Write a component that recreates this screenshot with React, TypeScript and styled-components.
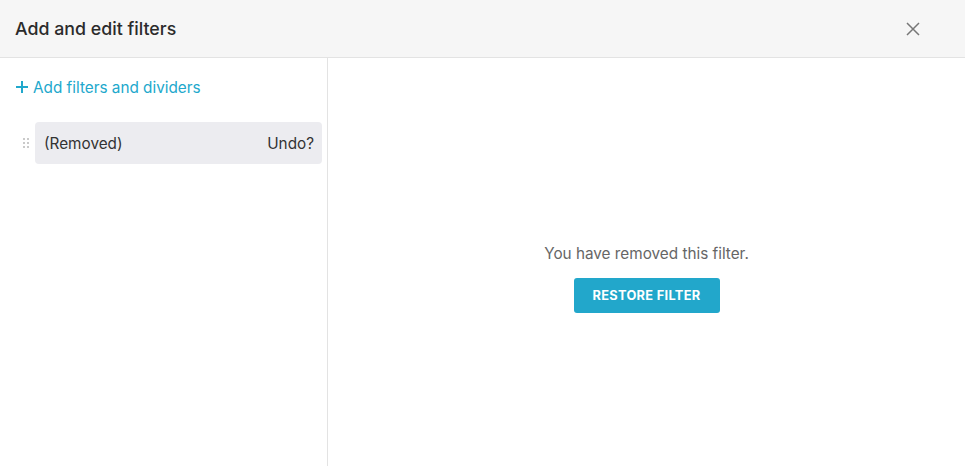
import React from "react";
import styled, { createGlobalStyle } from "styled-components";

const Global = createGlobalStyle`
  html, body {
    margin: 0;
    padding: 0;
    background: #fff;
    font-family: Inter, "Noto Sans", sans-serif;
  }
  * { box-sizing: border-box; }
`;

const Modal = styled.div`
  width: 965px;
  height: 466px;
  display: flex;
  flex-direction: column;
  background: #fff;
`;

const Header = styled.div`
  height: 58px;
  flex-shrink: 0;
  background: #f6f6f6;
  border-bottom: 1px solid #e3e3e3;
  display: flex;
  align-items: center;
  justify-content: space-between;
  padding: 0 44px 0 15px;
  & > h1 {
    margin: 0;
    font-size: 17.8px;
    font-weight: 500;
    color: #2b2b2b;
  }
`;

const CloseBtn = styled.button`
  border: 0;
  background: none;
  padding: 0;
  width: 16px;
  height: 16px;
  display: flex;
  cursor: pointer;
`;

const Body = styled.div`
  flex: 1;
  display: flex;
`;

const Sidebar = styled.div`
  width: 328px;
  border-right: 1px solid #e3e3e3;
  padding: 19px 5px 0 15px;
`;

const AddLink = styled.a`
  display: flex;
  align-items: center;
  gap: 4px;
  color: #21a8cc;
  font-size: 15.3px;
  height: 20px;
  cursor: pointer;
`;

const Row = styled.div`
  display: flex;
  align-items: center;
  margin-top: 25px;
  gap: 6px;
  padding-left: 8px;
`;

const Handle = styled.div`
  display: grid;
  grid-template-columns: 2px 2px;
  gap: 2px;
  & > span {
    width: 2px;
    height: 2px;
    border-radius: 1px;
    background: #b8b8b8;
  }
`;

const Item = styled.div`
  flex: 1;
  height: 42px;
  background: #ececf0;
  border-radius: 4px;
  display: flex;
  align-items: center;
  justify-content: space-between;
  padding: 0 8px 0 9px;
  font-size: 15.3px;
  color: #333;
`;

const Main = styled.div`
  flex: 1;
  display: flex;
  flex-direction: column;
  align-items: center;
  padding-top: 186px;
  & > p {
    margin: 0;
    font-size: 15.3px;
    color: #666;
    line-height: 20px;
  }
`;

const RestoreBtn = styled.button`
  margin-top: 14px;
  width: 146px;
  height: 35px;
  border: 0;
  border-radius: 3px;
  background: #22a7cb;
  color: #fff;
  font-family: Inter, "Noto Sans", sans-serif;
  font-weight: 700;
  font-size: 12.8px;
  letter-spacing: 0.3px;
  text-transform: uppercase;
  cursor: pointer;
`;

const App = () => {
  return (
    <>
      <Global />
      <Modal>
        <Header>
          <h1>Add and edit filters</h1>
          <CloseBtn aria-label="close">
            <svg width="16" height="16" viewBox="0 0 16 16">
              <path d="M2 2L14 14M14 2L2 14" stroke="#777" strokeWidth="1.5" fill="none" />
            </svg>
          </CloseBtn>
        </Header>
        <Body>
          <Sidebar>
            <AddLink>
              <svg width="14" height="14" viewBox="0 0 14 14">
                <path d="M7 1V13M1 7H13" stroke="#21a8cc" strokeWidth="2" />
              </svg>
              Add filters and dividers
            </AddLink>
            <Row>
              <Handle>
                {Array.from({ length: 6 }).map((_, i) => (
                  <span key={i} />
                ))}
              </Handle>
              <Item>
                <span>(Removed)</span>
                <span>Undo?</span>
              </Item>
            </Row>
          </Sidebar>
          <Main>
            <p>You have removed this filter.</p>
            <RestoreBtn>Restore filter</RestoreBtn>
          </Main>
        </Body>
      </Modal>
    </>
  );
};

export default App;
